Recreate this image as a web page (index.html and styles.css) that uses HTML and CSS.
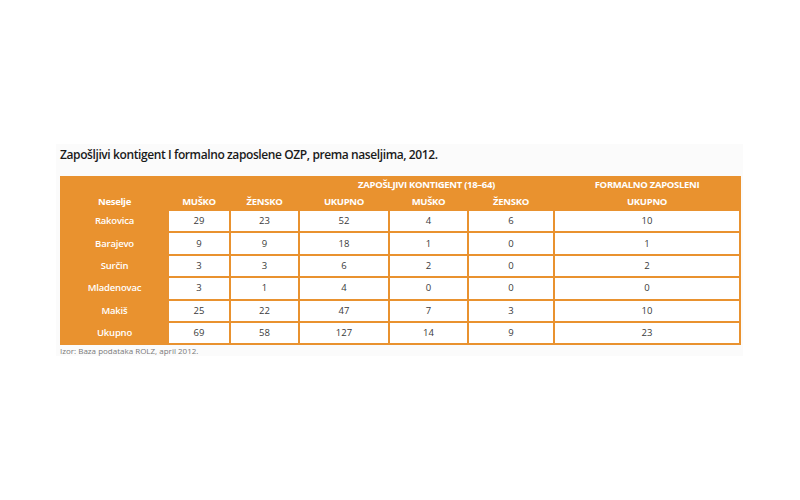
FILE: index.html
```html
<!DOCTYPE html>
<html>
<head>
<meta charset="utf-8">
<link rel="stylesheet" href="styles.css">
</head>
<body>
<div class="panel">
  <h1 class="title">Zapošljivi kontigent I formalno zaposlene OZP, prema naseljima, 2012.</h1>
  <table class="data">
    <colgroup>
      <col class="c1"><col class="c2"><col class="c3"><col class="c4"><col class="c5"><col class="c6"><col class="c7">
    </colgroup>
    <thead>
      <tr class="h1">
        <th colspan="3"></th>
        <th colspan="3">ZAPOŠLJIVI KONTIGENT (18–64)</th>
        <th>FORMALNO ZAPOSLENI</th>
      </tr>
      <tr class="h2">
        <th>Neselje</th>
        <th>MUŠKO</th>
        <th>ŽENSKO</th>
        <th>UKUPNO</th>
        <th>MUŠKO</th>
        <th>ŽENSKO</th>
        <th>UKUPNO</th>
      </tr>
    </thead>
    <tbody>
      <tr><th>Rakovica</th><td>29</td><td>23</td><td>52</td><td>4</td><td>6</td><td>10</td></tr>
      <tr><th>Barajevo</th><td>9</td><td>9</td><td>18</td><td>1</td><td>0</td><td>1</td></tr>
      <tr><th>Surčin</th><td>3</td><td>3</td><td>6</td><td>2</td><td>0</td><td>2</td></tr>
      <tr><th>Mladenovac</th><td>3</td><td>1</td><td>4</td><td>0</td><td>0</td><td>0</td></tr>
      <tr><th>Makiš</th><td>25</td><td>22</td><td>47</td><td>7</td><td>3</td><td>10</td></tr>
      <tr><th>Ukupno</th><td>69</td><td>58</td><td>127</td><td>14</td><td>9</td><td>23</td></tr>
    </tbody>
  </table>
  <p class="source">Izor: Baza podataka ROLZ, april 2012.</p>
</div>
</body>
</html>
```

FILE: styles.css
```css
html, body {
  margin: 0;
  padding: 0;
  background: #ffffff;
}
body {
  padding: 144px 0 0 56px;
  font-family: "Open Sans", "Liberation Sans", sans-serif;
}
.panel {
  width: 683px;
  height: 212px;
  padding-left: 4px;
  background: #fbfbfb;
}
.title {
  margin: 0;
  padding-top: 3px;
  height: 16px;
  line-height: 16px;
  font-size: 12px;
  font-weight: 600;
  color: #1a1a1a;
  letter-spacing: -0.4px;
  white-space: nowrap;
}
.data {
  margin-top: 13px;
  width: 681px;
  table-layout: fixed;
  border-collapse: separate;
  border-spacing: 2px;
  background: #e9922f;
}
.c1 { width: 105px; }
.c2 { width: 60px; }
.c3 { width: 67px; }
.c4 { width: 88px; }
.c5 { width: 77px; }
.c6 { width: 84px; }
.c7 { width: 184px; }
.data th, .data td {
  padding: 0;
  text-align: center;
  white-space: nowrap;
  overflow: hidden;
}
.data thead th {
  color: #ffffff;
  font-size: 9.5px;
  font-weight: 700;
  letter-spacing: -0.3px;
}
.h1 th { height: 14px; line-height: 14px; }
.h2 th { height: 15px; line-height: 15px; }
.data tbody th {
  height: 20.4px;
  line-height: 20px;
  color: #ffffff;
  font-size: 9.5px;
  font-weight: 600;
  letter-spacing: -0.2px;
}
.data tbody td {
  height: 20.4px;
  line-height: 20px;
  background: #ffffff;
  color: #3a3a3a;
  font-size: 9.5px;
}
.source {
  margin: 1px 0 0 0;
  font-size: 8px;
  line-height: 10px;
  color: #7a7a7a;
}
```
